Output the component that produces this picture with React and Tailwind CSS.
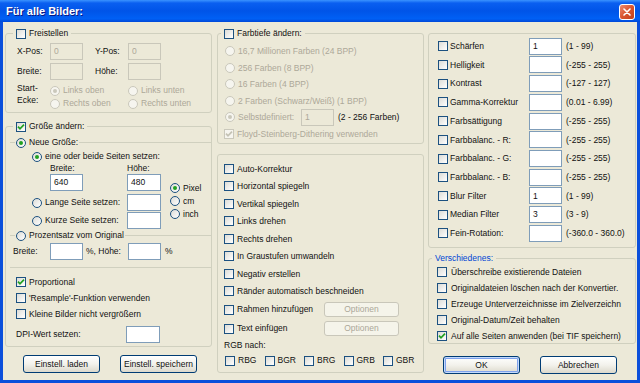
import React from 'react';

// XP-style dialog: "Für alle Bilder:" (batch conversion settings)

const CheckBox = ({ checked = false, disabled = false }) => (
    <span
        className={`flex h-[10px] w-[10px] shrink-0 items-center justify-center border ${
            disabled
                ? 'border-[#cac8bb] bg-[#f6f5ef]'
                : 'border-[#1c5180] bg-gradient-to-br from-[#dcdcd7] to-white'
        }`}
    >
        {checked && (
            <svg width="8" height="8" viewBox="0 0 8 8">
                <path
                    d="M1 3.6 L3 5.8 L7 1.6"
                    fill="none"
                    stroke={disabled ? '#c4c2b4' : '#21a121'}
                    strokeWidth="1.7"
                />
            </svg>
        )}
    </span>
);

const Radio = ({ checked = false, disabled = false }) => (
    <span
        className={`flex h-[10px] w-[10px] shrink-0 items-center justify-center rounded-full border ${
            disabled
                ? 'border-[#cac8bb] bg-[#f6f5ef]'
                : 'border-[#1c5180] bg-gradient-to-br from-[#dcdcd7] to-white'
        }`}
    >
        {checked && (
            <span className={`h-[4px] w-[4px] rounded-full ${disabled ? 'bg-[#cac8bb]' : 'bg-[#21a121]'}`} />
        )}
    </span>
);

const Field = ({ value = '', disabled = false, className = 'w-[33px]' }) => (
    <span
        className={`flex h-[17px] shrink-0 items-center border px-[3px] ${
            disabled ? 'border-[#c9c7ba] bg-[#ece9d8] text-[#aca899]' : 'border-[#7f9db9] bg-white'
        } ${className}`}
    >
        {value}
    </span>
);

const Button = ({ children, primary = false, disabled = false, className = 'h-[18px] w-[77px]' }) => (
    <button
        type="button"
        className={`flex shrink-0 items-center justify-center rounded-[3px] border ${
            disabled
                ? 'border-[#c9c7ba] bg-[#f5f4ea] text-[#aca899]'
                : 'border-[#003c74] bg-gradient-to-b from-white via-[#f3f2ec] to-[#dcd9cc]'
        } ${primary ? 'shadow-[inset_0_0_0_1px_#c4dafc,inset_0_0_0_2px_#7fa2ec]' : ''} ${className}`}
    >
        {children}
    </button>
);

const CheckRow = ({ label, checked, disabled, className = 'h-[16px]', gap = 'gap-[3px]' }) => (
    <div className={`flex items-center ${gap} ${className}`}>
        <CheckBox checked={checked} disabled={disabled} />
        <span className={disabled ? 'text-[#aca899]' : ''}>{label}</span>
    </div>
);

const RadioRow = ({ label, checked, disabled, className = 'h-[13px]' }) => (
    <div className={`flex items-center gap-[3px] ${className}`}>
        <Radio checked={checked} disabled={disabled} />
        <span className={disabled ? 'text-[#aca899]' : ''}>{label}</span>
    </div>
);

const filters = [
    { label: 'Schärfen', value: '1', range: '(1 - 99)' },
    { label: 'Helligkeit', value: '', range: '(-255 - 255)' },
    { label: 'Kontrast', value: '', range: '(-127 - 127)' },
    { label: 'Gamma-Korrektur', value: '', range: '(0.01 - 6.99)' },
    { label: 'Farbsättigung', value: '', range: '(-255 - 255)' },
    { label: 'Farbbalanc. - R:', value: '', range: '(-255 - 255)' },
    { label: 'Farbbalanc. - G:', value: '', range: '(-255 - 255)' },
    { label: 'Farbbalanc. - B:', value: '', range: '(-255 - 255)' },
    { label: 'Blur Filter', value: '1', range: '(1 - 99)' },
    { label: 'Median Filter', value: '3', range: '(3 - 9)' },
    { label: 'Fein-Rotation:', value: '', range: '(-360.0 - 360.0)' },
];

const actions = [
    'Auto-Korrektur',
    'Horizontal spiegeln',
    'Vertikal spiegeln',
    'Links drehen',
    'Rechts drehen',
    'In Graustufen umwandeln',
    'Negativ erstellen',
    'Ränder automatisch beschneiden',
];

const misc = [
    { label: 'Überschreibe existierende Dateien' },
    { label: 'Originaldateien löschen nach der Konvertier.' },
    { label: 'Erzeuge Unterverzeichnisse im Zielverzeichn' },
    { label: 'Original-Datum/Zeit behalten' },
    { label: 'Auf alle Seiten anwenden (bei TIF speichern)', checked: true },
];

const App = () => {
    return (
        <div className="flex h-[383px] w-[640px] flex-col overflow-hidden whitespace-nowrap bg-[#0b4fdb] font-['Liberation_Sans',Arial,sans-serif] text-[8.5px] leading-none text-[#111]">
            {/* Title bar */}
            <div className="flex h-[22px] shrink-0 items-center justify-between bg-[linear-gradient(180deg,#3a93ff_0%,#0a5ff0_14%,#0054e8_50%,#0060f5_85%,#0048d8_100%)] pl-[6px] pr-[5px]">
                <span className="text-[11px] font-bold text-white [text-shadow:1px_1px_0_#0a1883]">Für alle Bilder:</span>
                <span className="mt-[2px] flex h-[16px] w-[16px] items-center justify-center rounded-[3px] border border-white bg-gradient-to-br from-[#ea8a70] via-[#d9542e] to-[#c0401e]">
                    <svg width="8" height="8" viewBox="0 0 8 8">
                        <path d="M1 1 L7 7 M7 1 L1 7" stroke="white" strokeWidth="1.6" strokeLinecap="round" />
                    </svg>
                </span>
            </div>

            {/* Dialog body */}
            <div className="mx-[3px] mb-[3px] flex flex-1 bg-[#ece9d8] pl-[2px]">
                {/* Left column */}
                <div className="flex w-[207px] flex-col pt-[5px]">
                    <fieldset className="h-[86px] rounded-[3px] border border-[#d0d0bf]">
                        <legend className="ml-[7px] flex h-[13px] items-center gap-[3px] px-[3px]">
                            <CheckBox />
                            <span>Freistellen</span>
                        </legend>
                        <div className="flex flex-col gap-[3px] pl-[11px] pt-[3px]">
                            <div className="flex h-[17px] items-center">
                                <span className="w-[33px]">X-Pos:</span>
                                <Field disabled value="0" />
                                <span className="ml-[12px] w-[33px]">Y-Pos:</span>
                                <Field disabled value="0" />
                            </div>
                            <div className="flex h-[17px] items-center">
                                <span className="w-[33px]">Breite:</span>
                                <Field disabled />
                                <span className="ml-[12px] w-[33px]">Höhe:</span>
                                <Field disabled />
                            </div>
                            <div className="-mt-[1px] flex">
                                <div className="flex w-[33px] flex-col leading-[12px]">
                                    <span>Start-</span>
                                    <span>Ecke:</span>
                                </div>
                                <div className="grid grid-cols-[78px_78px] pt-[2px]">
                                    <RadioRow disabled checked label="Links oben" />
                                    <RadioRow disabled label="Links unten" />
                                    <RadioRow disabled label="Rechts oben" />
                                    <RadioRow disabled label="Rechts unten" />
                                </div>
                            </div>
                        </div>
                    </fieldset>

                    <fieldset className="mt-[7px] h-[227px] rounded-[3px] border border-[#d0d0bf]">
                        <legend className="ml-[7px] flex h-[13px] items-center gap-[3px] px-[3px]">
                            <CheckBox checked />
                            <span>Größe ändern:</span>
                        </legend>

                        <fieldset className="ml-[4px] mt-[3px] h-[93px] border-t border-[#d0d0bf]">
                            <legend className="ml-[5px] flex h-[13px] items-center gap-[3px] px-[1px]">
                                <Radio checked />
                                <span>Neue Größe:</span>
                            </legend>
                            <div className="mt-[1px] flex h-[13px] items-center gap-[3px] pl-[22px]">
                                <Radio checked />
                                <span>eine oder beide Seiten setzen:</span>
                            </div>
                            <div className="flex">
                                <div className="flex w-[155px] flex-col">
                                    <div className="flex h-[11px] items-center pl-[40px]">
                                        <span className="w-[77px]">Breite:</span>
                                        <span>Höhe:</span>
                                    </div>
                                    <div className="flex h-[17px] pl-[40px]">
                                        <Field value="640" />
                                        <span className="w-[44px]" />
                                        <Field value="480" className="w-[34px]" />
                                    </div>
                                    <div className="mt-[3px] flex h-[17px] items-center pl-[22px]">
                                        <div className="flex w-[95px] items-center gap-[3px]">
                                            <Radio />
                                            <span>Lange Seite setzen:</span>
                                        </div>
                                        <Field className="w-[34px]" />
                                    </div>
                                    <div className="mt-[1px] flex h-[17px] items-center pl-[22px]">
                                        <div className="flex w-[95px] items-center gap-[3px]">
                                            <Radio />
                                            <span>Kurze Seite setzen:</span>
                                        </div>
                                        <Field className="w-[34px]" />
                                    </div>
                                </div>
                                <div className="flex flex-col pl-[5px] pt-[18.5px]">
                                    <RadioRow checked label="Pixel" />
                                    <RadioRow label="cm" />
                                    <RadioRow label="inch" />
                                </div>
                            </div>
                        </fieldset>

                        <fieldset className="ml-[4px] h-[39px] border-y border-[#d0d0bf]">
                            <legend className="ml-[5px] flex h-[13px] items-center gap-[3px] px-[1px]">
                                <Radio />
                                <span>Prozentsatz vom Original</span>
                            </legend>
                            <div className="mt-[1px] flex h-[17px] items-center pl-[3px]">
                                <span className="w-[37px]">Breite:</span>
                                <Field />
                                <span className="ml-[3px] w-[42px]">%, Höhe:</span>
                                <Field />
                                <span className="ml-[4px]">%</span>
                            </div>
                        </fieldset>

                        <div className="flex flex-col pl-[10px] pt-[6px]">
                            <CheckRow checked label="Proportional" />
                            <CheckRow label="'Resample'-Funktion verwenden" />
                            <CheckRow label="Kleine Bilder nicht vergrößern" />
                            <div className="mt-[4px] flex h-[17px] items-center">
                                <span className="w-[110px]">DPI-Wert setzen:</span>
                                <Field className="w-[34px]" />
                            </div>
                        </div>
                    </fieldset>

                    <div className="mt-[8px] flex gap-[20px] pl-[18px]">
                        <Button>Einstell. laden</Button>
                        <Button>Einstell. speichern</Button>
                    </div>
                </div>

                {/* Middle column */}
                <div className="ml-[5px] flex w-[207px] flex-col pt-[5px]">
                    <fieldset className="h-[117px] rounded-[3px] border border-[#d0d0bf]">
                        <legend className="ml-[3px] flex h-[13px] items-center gap-[3px] px-[3px]">
                            <CheckBox />
                            <span>Farbtiefe ändern:</span>
                        </legend>
                        <div className="flex flex-col pl-[7px] pt-[3px]">
                            <RadioRow disabled className="h-[16.5px]" label="16,7 Millionen Farben (24 BPP)" />
                            <RadioRow disabled className="h-[16.5px]" label="256 Farben (8 BPP)" />
                            <RadioRow disabled className="h-[16.5px]" label="16 Farben (4 BPP)" />
                            <RadioRow disabled className="h-[16.5px]" label="2 Farben (Schwarz/Weiß) (1 BPP)" />
                            <div className="flex h-[16.5px] items-center">
                                <Radio disabled checked />
                                <span className="ml-[3px] w-[63px] text-[#aca899]">Selbstdefiniert:</span>
                                <Field disabled value="1" />
                                <span className="ml-[4px]">(2 - 256 Farben)</span>
                            </div>
                            <CheckRow
                                disabled
                                checked
                                className="-ml-[1px] h-[16.5px]"
                                label="Floyd-Steinberg-Dithering verwenden"
                            />
                        </div>
                    </fieldset>

                    <fieldset className="mt-[10px] h-[219px] rounded-[3px] border border-[#d0d0bf]">
                        <div className="flex flex-col pl-[6px] pt-[5px]">
                            {actions.map((label) => (
                                <CheckRow key={label} className="h-[17.5px]" label={label} />
                            ))}
                            <div className="flex h-[19px] items-center">
                                <CheckBox />
                                <span className="ml-[3px] w-[87px]">Rahmen hinzufügen</span>
                                <Button disabled className="h-[15px] w-[75px]">Optionen</Button>
                            </div>
                            <div className="flex h-[19px] items-center">
                                <CheckBox />
                                <span className="ml-[3px] w-[87px]">Text einfügen</span>
                                <Button disabled className="h-[15px] w-[75px]">Optionen</Button>
                            </div>
                            <div className="mt-[0.5px] flex h-[13px] items-center">RGB nach:</div>
                            <div className="mt-[2.5px] flex pl-[1px]">
                                {['RBG', 'BGR', 'BRG', 'GRB', 'GBR'].map((label) => (
                                    <CheckRow key={label} className="h-[13px] w-[39.5px]" label={label} />
                                ))}
                            </div>
                        </div>
                    </fieldset>
                </div>

                {/* Right column */}
                <div className="ml-[4px] flex w-[208px] flex-col pt-[11px]">
                    <fieldset className="h-[215px] rounded-[3px] border border-[#d0d0bf]">
                        <div className="flex flex-col gap-[1.73px] pl-[9px] pt-[3.7px]">
                            {filters.map((f) => (
                                <div key={f.label} className="flex h-[17px] items-center">
                                    <CheckBox />
                                    <span className="ml-[2px] w-[79px]">{f.label}</span>
                                    <Field value={f.value} />
                                    <span className="ml-[4px]">{f.range}</span>
                                </div>
                            ))}
                        </div>
                    </fieldset>

                    <fieldset className="mt-[5px] h-[91px] rounded-[3px] border border-[#d0d0bf]">
                        <legend className="ml-[3px] flex h-[11px] items-center px-[3px] text-[#0046d5]">
                            Verschiedenes:
                        </legend>
                        <div className="flex flex-col pl-[8px]">
                            {misc.map((m) => (
                                <CheckRow key={m.label} checked={m.checked} gap="gap-[4px]" label={m.label} />
                            ))}
                        </div>
                    </fieldset>

                    <div className="mt-[12px] flex gap-[20px] pl-[15px]">
                        <Button primary>OK</Button>
                        <Button>Abbrechen</Button>
                    </div>
                </div>
            </div>
        </div>
    );
};

export default App;
